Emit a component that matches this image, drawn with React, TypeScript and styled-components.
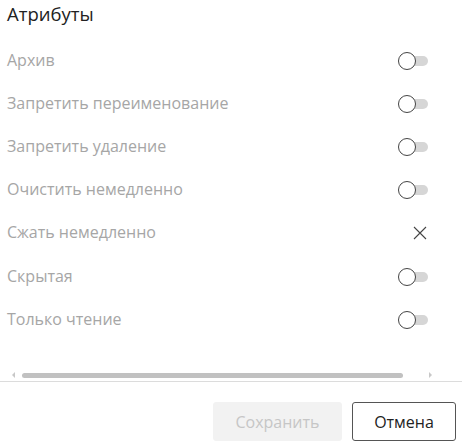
import React from "react";
import styled, { createGlobalStyle } from "styled-components";

const Global = createGlobalStyle`
  html, body { margin: 0; padding: 0; background: #fff; }
  body { font-family: "Open Sans", Roboto, "Liberation Sans", Arial, sans-serif; }
`;

const Panel = styled.div`
  width: 462px;
  height: 448px;
  display: flex;
  flex-direction: column;
  box-sizing: border-box;
  overflow: hidden;
`;

const Title = styled.div`
  height: 28px;
  line-height: 28px;
  padding: 0 7px;
  font-size: 18.5px;
  color: #222;
`;

const List = styled.div`
  display: flex;
  flex-direction: column;
  padding-top: 11px;
`;

const Row = styled.div`
  height: 43.2px;
  display: flex;
  align-items: center;
  justify-content: space-between;
  padding: 0 34px 0 7px;
`;

const Label = styled.span`
  font-size: 16px;
  line-height: 20px;
  padding-bottom: 2px;
  color: #a6a6a6;
`;

const Toggle = styled.span`
  position: relative;
  width: 30px;
  height: 18px;
  display: flex;
  align-items: center;
`;

const Track = styled.span`
  margin-left: 6px;
  width: 24px;
  height: 10px;
  border-radius: 5px;
  background: #d6d6d6;
`;

const Knob = styled.span`
  position: absolute;
  left: 0;
  top: 0;
  width: 16px;
  height: 16px;
  border-radius: 50%;
  border: 1px solid #444;
  background: #fff;
`;

const Cross = styled.span`
  width: 30px;
  display: flex;
  justify-content: flex-end;
  padding-right: 1px;
`;

const ScrollArea = styled.div`
  margin-top: auto;
  display: flex;
  flex-direction: column;
`;

const ScrollBar = styled.div`
  height: 10px;
  display: flex;
  align-items: center;
  padding: 0 30px 0 12px;
  gap: 7px;
`;

const Arrow = styled.span<{ $dir: "left" | "right" }>`
  width: 0;
  height: 0;
  border-top: 3px solid transparent;
  border-bottom: 3px solid transparent;
  ${(p) =>
    p.$dir === "left"
      ? "border-right: 3px solid #c8c8c8;"
      : "border-left: 3px solid #c8c8c8; margin-left: 19px;"}
`;

const Thumb = styled.span`
  width: 381px;
  height: 5px;
  border-radius: 3px;
  background: #c1c1c1;
`;

const Divider = styled.div`
  height: 1px;
  background: #dcdcdc;
  margin-top: 1px;
`;

const Footer = styled.div`
  display: flex;
  justify-content: flex-end;
  gap: 10px;
  padding: 20px 6px 7px 0;
`;

const Button = styled.button<{ $primary?: boolean }>`
  height: 39px;
  box-sizing: border-box;
  font-family: inherit;
  font-size: 16px;
  border-radius: 3px;
  padding: 0;
  ${(p) =>
    p.$primary
      ? `width: 129px; background: #f2f2f2; border: 1px solid #f2f2f2; color: #c6c6c6;`
      : `width: 104px; background: #fff; border: 1px solid #555; color: #222;`}
`;

const items: { label: string; cross?: boolean }[] = [
  { label: "Архив" },
  { label: "Запретить переименование" },
  { label: "Запретить удаление" },
  { label: "Очистить немедленно" },
  { label: "Сжать немедленно", cross: true },
  { label: "Скрытая" },
  { label: "Только чтение" },
];

export default function App() {
  return (
    <>
      <Global />
      <Panel>
        <Title>Атрибуты</Title>
        <List>
          {items.map((it) => (
            <Row key={it.label}>
              <Label>{it.label}</Label>
              {it.cross ? (
                <Cross>
                  <svg width="14" height="14" viewBox="0 0 14 14">
                    <path d="M1 1 L13 13 M13 1 L1 13" stroke="#444" strokeWidth="1.1" fill="none" />
                  </svg>
                </Cross>
              ) : (
                <Toggle>
                  <Track />
                  <Knob />
                </Toggle>
              )}
            </Row>
          ))}
        </List>
        <ScrollArea>
          <ScrollBar>
            <Arrow $dir="left" />
            <Thumb />
            <Arrow $dir="right" />
          </ScrollBar>
          <Divider />
        </ScrollArea>
        <Footer>
          <Button $primary>Сохранить</Button>
          <Button>Отмена</Button>
        </Footer>
      </Panel>
    </>
  );
}
